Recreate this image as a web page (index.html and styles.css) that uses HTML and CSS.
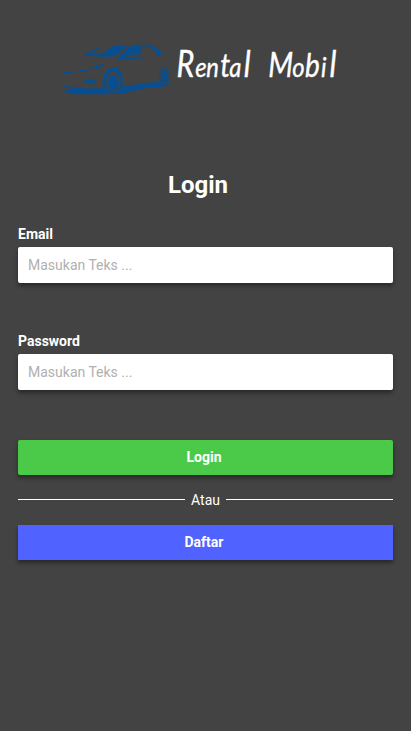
FILE: index.html
```html
<!DOCTYPE html>
<html lang="id">
<head>
<meta charset="utf-8">
<meta name="viewport" content="width=device-width, initial-scale=1">
<title>Rental Mobil</title>
<link rel="stylesheet" href="styles.css">
</head>
<body>
<main class="screen">
  <svg class="logo" viewBox="0 0 300 70" role="img" aria-label="Rental Mobil">
    <g class="car" transform="scale(.33333)">
      <path d="M86 62Q106 45 130 38L150 34Q120 45 103 57L136 57Q153 51 164 39Q177 30 196 30L219 30Q211 38 201 45Q187 60 170 65Q130 65 86 62Z"/>
      <path d="M185 78Q198 53 223 35Q231 30 245 29L276 29Q302 33 315 46Q320 53 318 61L306 64Q305 49 290 40Q276 33 256 33Q260 45 257 56L218 61L208 67L267 65L267 69L238 73L202 73Z"/>
      <path d="M70 98L76 105L91 106L108 102L92 110L77 111ZM108 101Q123 90 145 87Q143 96 134 100L116 103L123 98Z"/>
      <path d="M15 107L30 111L56 112L55 114L28 114ZM92 133Q101 130 114 133L121 138L121 144L82 142Z"/>
      <path d="M15 149L30 153L64 157L94 160L147 160Q139 142 145 124Q153 101 175 98Q194 98 201 117Q206 136 202 155L236 150L290 142L316 141Q309 125 315 108Q321 95 330 95Q344 98 346 121Q346 144 334 154L270 160L200 176L150 178L64 178L26 171Q34 165 55 162L28 157Z"/>
      <ellipse class="cut" cx="175" cy="141" rx="22" ry="31"/>
      <ellipse cx="175" cy="143" rx="16" ry="24"/>
      <ellipse class="cut" cx="329" cy="125" rx="14" ry="25"/>
      <ellipse cx="329" cy="126" rx="10" ry="19"/>
    </g>
    <g class="wordmark" transform="scale(.85 1)">
      <text y="42"><tspan x="143">R</tspan><tspan class="small" x="165 178">en</tspan><tspan class="mid" x="194.500">t</tspan><tspan class="small" x="205">a</tspan><tspan x="222">l</tspan></text>
      <text y="42"><tspan class="wide" x="251">M</tspan><tspan class="small" x="279">o</tspan><tspan class="mid" x="294">b</tspan><tspan class="small" x="313">i</tspan><tspan x="323">l</tspan></text>
    </g>
  </svg>
  <h1 class="title">Login</h1>
  <form class="form">
    <div class="field">
      <label class="label" for="email">Email</label>
      <input class="input" id="email" type="email" placeholder="Masukan Teks ...">
    </div>
    <div class="field">
      <label class="label" for="password">Password</label>
      <input class="input" id="password" type="password" placeholder="Masukan Teks ...">
    </div>
    <button class="button login" type="button">Login</button>
    <div class="divider"><span>Atau</span></div>
    <button class="button register" type="button">Daftar</button>
  </form>
</main>
</body>
</html>
```
FILE: styles.css
```css
* { box-sizing: border-box; }

body {
  margin: 0;
  background: #434343;
  color: #fff;
  font-family: Roboto, sans-serif;
  font-size: 14px;
}

.screen {
  min-height: 731px;
  padding: 35px 18px 0;
}

.logo {
  display: block;
  width: 300px;
  height: 70px;
  margin-left: 37px;
}

.car { fill: #074f91; }
.cut { fill: #434343; }

.wordmark {
  fill: #fff;
  stroke: #fff;
  stroke-width: .4px;
  stroke-linejoin: round;
  font-family: Lato, sans-serif;
  font-size: 36px;
  font-style: italic;
}

.wordmark .small { font-size: 28px; }
.wordmark .mid { font-size: 33px; }
.wordmark .wide { font-size: 34px; }

.title {
  width: 360px;
  margin: 66px 0 0;
  font-size: 24px;
  font-weight: 700;
  line-height: 28px;
  text-align: center;
}

.form {
  display: flex;
  flex-direction: column;
  margin-top: 27px;
}

.field {
  display: flex;
  flex-direction: column;
  gap: 5px;
  margin-bottom: 50px;
}

.label {
  font-weight: 700;
  line-height: 16px;
}

.input {
  width: 100%;
  height: 36px;
  padding: 0 10px;
  border: 0;
  border-radius: 2px;
  background: #fff;
  box-shadow: 0 3px 4px rgba(0, 0, 0, .4);
  font: 14px Roboto, sans-serif;
}

.input::placeholder { color: #b0b0b0; opacity: 1; }

.button {
  height: 35px;
  padding: 0 3px 2px 0;
  border: 0;
  color: #fff;
  box-shadow: 0 3px 4px rgba(0, 0, 0, .4);
  font: 700 14px Roboto, sans-serif;
  text-align: center;
}

.login { border-radius: 2px; background: #4bca49; }
.register { background: #5062ff; }

.divider {
  display: flex;
  align-items: center;
  gap: 6px;
  height: 50px;
}

.divider::before,
.divider::after {
  content: "";
  flex: 1;
  height: 1px;
  margin-bottom: 1px;
  background: #fff;
}
```
